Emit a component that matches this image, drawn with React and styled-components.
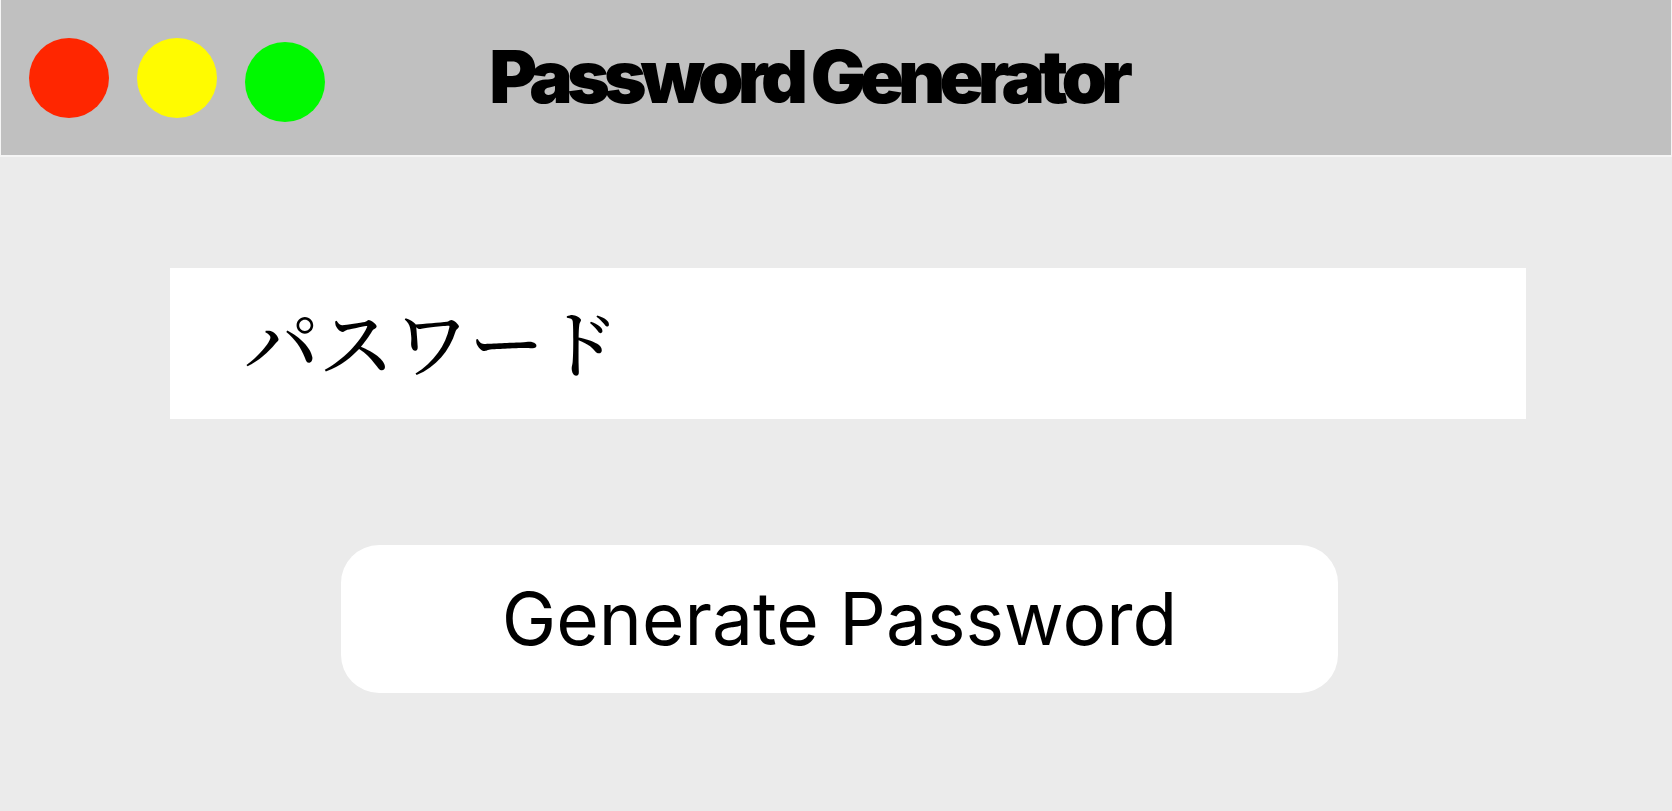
import React, { useState } from "react";
import styled, { createGlobalStyle } from "styled-components";

const GlobalStyle = createGlobalStyle`
  * {
    box-sizing: border-box;
  }
  body {
    margin: 0;
    background-color: #ebebeb;
    font-family: Inter, "Noto Sans CJK JP", sans-serif;
    color: black;
  }
`;

const Window = styled.div`
  min-height: 100vh;
  background-color: #ebebeb;
`;

const TitleBar = styled.header`
  display: grid;
  grid-template-columns: 1fr auto 1fr;
  align-items: start;
  height: 157px;
  padding: 38px 84px 0 28px;
  background-color: #c0c0c0;
  border: 1px solid #f5f5f5;
  border-top: 0;
  border-bottom-width: 2px;
`;

const Lights = styled.div`
  display: flex;
  column-gap: 28px;
  height: 84px;
`;

const Light = styled.button`
  width: 80px;
  height: 80px;
  padding: 0;
  border: none;
  border-radius: 50%;
  background-color: ${(props) => props.$color};
  cursor: pointer;

  &:last-child {
    align-self: flex-end;
  }
`;

/* Heavy title with tight tracking, the letters run into each other */
const Title = styled.h1`
  margin: 0;
  font-size: 73px;
  line-height: 78px;
  font-weight: 900;
  letter-spacing: -6px;
  white-space: nowrap;
`;

const Content = styled.main`
  display: flex;
  flex-direction: column;
  row-gap: 126px;
  padding: 111px 146px 111px 170px;
`;

const PasswordInput = styled.input`
  width: 100%;
  height: 151px;
  padding: 0 74px 8px;
  border: none;
  background-color: white;
  color: black;
  font-family: "Noto Serif CJK JP", "Noto Sans CJK JP", serif;
  font-size: 75px;
  font-weight: 500;
`;

const GenerateButton = styled.button`
  height: 148px;
  margin: 0 188px 0 171px;
  border: none;
  border-radius: 38px;
  background-color: white;
  color: black;
  font-family: inherit;
  font-size: 73px;
  line-height: 88px;
  white-space: nowrap;
  cursor: pointer;
`;

const lights = [
  { label: "Close", color: "#ff2600" },
  { label: "Minimize", color: "#fffb00" },
  { label: "Zoom", color: "#00f900" },
];

const App = () => {
  const [password, setPassword] = useState("パスワード");

  return (
    <Window>
      <GlobalStyle />
      <TitleBar>
        <Lights>
          {lights.map((light) => (
            <Light
              key={light.label}
              type="button"
              aria-label={light.label}
              $color={light.color}
            />
          ))}
        </Lights>
        <Title>Password Generator</Title>
      </TitleBar>
      <Content>
        <PasswordInput
          type="text"
          aria-label="パスワード"
          value={password}
          onChange={(e) => setPassword(e.target.value)}
        />
        <GenerateButton type="button">Generate Password</GenerateButton>
      </Content>
    </Window>
  );
};

export default App;
